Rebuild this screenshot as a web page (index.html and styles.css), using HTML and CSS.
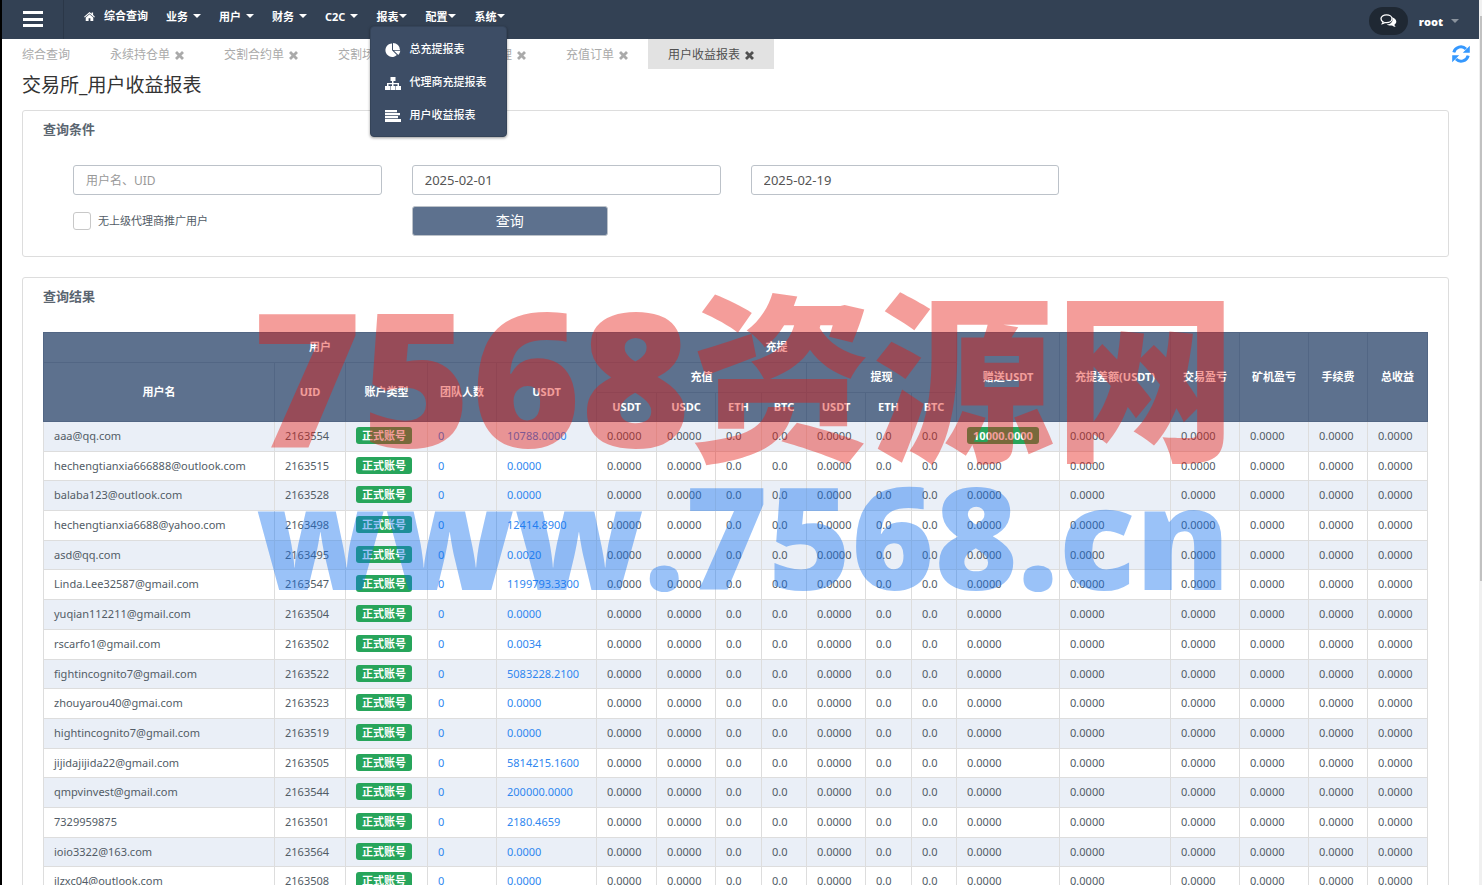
FILE: index.html
```html
<!DOCTYPE html>
<html lang="zh-CN">
<head>
<meta charset="utf-8">
<title>交易所_用户收益报表</title>
<link rel="stylesheet" href="styles.css">
</head>
<body>
<svg class="sprite" aria-hidden="true">
  <symbol id="close" viewBox="0 0 9 9"><path d="M2 2L7 7M7 2L2 7" stroke="currentColor" stroke-width="2.8" fill="none" stroke-linecap="square"/></symbol>
</svg>
<header class="topbar">
  <button class="menu-toggle" type="button" aria-label="菜单">
    <svg viewBox="0 0 20 17" width="20" height="17"><path d="M0 0h20v3H0zM0 7h20v3H0zM0 13h20v3H0z" fill="#fff"/></svg>
  </button>
  <nav class="nav">
    <a class="nav-item home" href="#"><svg viewBox="0 0 12 10" width="11" height="9"><path d="M6 0L0 5.200l.7.900L6 1.600l5.300 4.500.7-.900-2-1.800V.600H8.400v1.400zM6 2.600L1.800 6.100V10h3.200V7h2v3h3.200V6.100z" fill="#fff"/></svg>综合查询</a>
    <button class="nav-item" type="button">业务<i class="caret"></i></button>
    <button class="nav-item" type="button">用户<i class="caret"></i></button>
    <button class="nav-item" type="button">财务<i class="caret"></i></button>
    <button class="nav-item" type="button">C2C<i class="caret"></i></button>
    <div class="dropdown">
      <button class="nav-item tight" type="button" aria-expanded="true">报表<i class="caret"></i></button>
      <ul class="dropdown-menu">
        <li><a href="#"><svg viewBox="0 0 16 16" width="16" height="16"><path d="M7 1.500A6.700 6.700 0 1 0 11.800 13L7 8.200z" fill="#fff"/><path d="M8 1a7 7 0 0 1 7 6.900H8z" fill="#fff"/><path d="M9 8.700h6.300a7 7 0 0 1-2 4.300z" fill="#fff"/></svg>总充提报表</a></li>
        <li><a href="#"><svg viewBox="0 0 16 16" width="16" height="16"><path d="M5.500 2h5v4h-2v2h5.500v3H16v4h-5v-4h1.500V9.300h-4V11H10.500v4h-5v-4H7V9.300H3.500V11H5v4H0v-4h2V8h5V6H5.500z" fill="#fff"/></svg>代理商充提报表</a></li>
        <li><a href="#"><svg viewBox="0 0 16 16" width="16" height="16"><path d="M0 2h12v2.300H0zM0 5h15v2.300H0zM0 8h13v2.300H0zM0 11h16v3H0z" fill="#fff"/></svg>用户收益报表</a></li>
      </ul>
    </div>
    <button class="nav-item tight" type="button">配置<i class="caret"></i></button>
    <button class="nav-item tight" type="button">系统<i class="caret"></i></button>
  </nav>
  <div class="account">
    <button class="chat" type="button" aria-label="消息">
      <svg viewBox="0 0 17 14" width="17" height="14"><path d="M12 3.200c2.600.7 4.300 2.300 4.300 4.300 0 1.300-.7 2.400-1.900 3.200.2.900.7 1.500 1.300 2.200-1.400 0-2.600-.5-3.600-1.400-2.100.3-4-.1-5.300-1 4.200-.2 7-3.300 5.200-7.300z" fill="#fff"/><path d="M6.500.9c3.200 0 5.500 1.700 5.500 3.900s-2.300 3.900-5.500 3.900c-.6 0-1.100 0-1.600-.2-.7.600-1.600 1-2.500 1.100.4-.5.600-1 .7-1.700C1.700 7.200 1 6.100 1 4.800 1 2.600 3.300.9 6.500.9z" fill="#1f2833" stroke="#fff" stroke-width="1.300"/></svg>
    </button>
    <button class="user" type="button">root<i class="caret dim"></i></button>
  </div>
</header>

<nav class="tabs">
  <a class="tab" href="#">综合查询</a>
  <a class="tab" href="#">永续持仓单<svg><use href="#close"/></svg></a>
  <a class="tab" href="#">交割合约单<svg><use href="#close"/></svg></a>
  <a class="tab" href="#">交割场控<svg><use href="#close"/></svg></a>
  <a class="tab" href="#">用户基础管理<svg><use href="#close"/></svg></a>
  <a class="tab" href="#">充值订单<svg><use href="#close"/></svg></a>
  <a class="tab active" href="#" aria-current="page">用户收益报表<svg><use href="#close"/></svg></a>
  <button class="refresh" type="button" aria-label="刷新">
    <svg viewBox="0 0 18 18" width="18" height="18"><g fill="none" stroke="#3598fe" stroke-width="3"><path d="M1.800 7.400A7.300 7.300 0 0 1 14 4"/><path d="M16.200 10.600A7.300 7.300 0 0 1 4 14"/></g><path d="M17.800.8v6.900H10.800zM.2 17.200v-6.900H7.200z" fill="#3598fe"/></svg>
  </button>
</nav>

<main class="content">
  <h1>交易所_用户收益报表</h1>
  <section class="panel">
    <h2>查询条件</h2>
    <form class="filters">
      <input class="field" type="text" placeholder="用户名、UID" aria-label="用户名、UID">
      <input class="field" type="text" value="2025-02-01" aria-label="开始日期">
      <input class="field" type="text" value="2025-02-19" aria-label="结束日期">
      <label class="check"><input type="checkbox">无上级代理商推广用户</label>
      <button class="submit" type="button">查询</button>
    </form>
  </section>
  <section class="panel">
    <h2>查询结果</h2>
    <table class="report">
      <colgroup>
        <col class="c-name"><col class="c-uid"><col class="c-type"><col class="c-team"><col class="c-total">
        <col class="c-usdt"><col class="c-coin"><col class="c-eth"><col class="c-btc">
        <col class="c-coin"><col class="c-eth"><col class="c-btc">
        <col class="c-gift"><col class="c-diff"><col class="c-team"><col class="c-team"><col class="c-coin"><col class="c-usdt">
      </colgroup>
      <thead>
        <tr><th colspan="5">用户</th><th colspan="7">充提</th><th rowspan="3">赠送USDT</th><th rowspan="3">充提差额(USDT)</th><th rowspan="3">交易盈亏</th><th rowspan="3">矿机盈亏</th><th rowspan="3">手续费</th><th rowspan="3">总收益</th></tr>
        <tr><th rowspan="2">用户名</th><th rowspan="2">UID</th><th rowspan="2">账户类型</th><th rowspan="2">团队人数</th><th rowspan="2">USDT</th><th colspan="4">充值</th><th colspan="3">提现</th></tr>
        <tr class="coins"><th>USDT</th><th>USDC</th><th>ETH</th><th>BTC</th><th>USDT</th><th>ETH</th><th>BTC</th></tr>
      </thead>
      <tbody id="rows"></tbody>
    </table>
  </section>
</main>
<div class="watermark" aria-hidden="true">
  <div class="mark-red">7568<span>资源网</span></div>
  <div class="mark-blue">www.7568.cn</div>
</div>
<div class="scrollbar" aria-hidden="true"><div class="thumb"></div></div>
<script src="rows.js"></script>
</body>
</html>
```
FILE: styles.css
```css
* { box-sizing: border-box; }
body {
  margin: 0;
  height: 100vh;
  overflow: hidden;
  position: relative;
  border-left: 2px solid #000;
  background: #fff;
  color: #525c66;
  font: 11px/1.7 "Noto Sans", "Noto Sans CJK SC", sans-serif;
}
button, input { font-family: inherit; margin: 0; }
button { border: 0; padding: 0; background: none; color: inherit; cursor: pointer; }
a { color: inherit; text-decoration: none; }
svg { flex: none; }
.sprite { display: none; }

.topbar { display: flex; height: 39px; background: #334154; color: #fff; padding-right: 20px; margin-right: 3px; }
.menu-toggle { width: 62px; border-right: 1px solid #2b3748; display: flex; align-items: center; justify-content: center; }
.nav { display: flex; gap: 18px; padding-left: 20px; height: 32px; }
.nav-item { display: flex; align-items: center; gap: 5px; height: 32px; font-size: 11px; font-weight: 700; white-space: nowrap; }
.nav-item.home { gap: 9px; }
.nav-item.tight { gap: 1px; }
.caret { border: 4px solid transparent; border-top-color: #fff; border-bottom: 0; }
.caret.dim { border-top-color: #8b939d; }
.dropdown { position: relative; }
.dropdown-menu {
  position: absolute; z-index: 5; top: 26px; left: -6px; width: 137px;
  margin: 0; padding: 6px 0 4px; list-style: none;
  background: #3d4d65; border: 1px solid #354459; border-radius: 4px;
  box-shadow: 0 1px 3px rgba(0, 0, 0, .4);
}
.dropdown-menu a { display: flex; align-items: center; gap: 8px; height: 33px; padding-left: 14px; font-weight: 500; white-space: nowrap; }
.account { display: flex; align-items: center; gap: 11px; margin-left: auto; padding-top: 3px; }
.chat { display: flex; align-items: center; justify-content: center; width: 39px; height: 28px; border-radius: 14px; background: #1f2833; }
.user { display: flex; align-items: center; gap: 8px; font-family: "Open Sans", sans-serif; font-size: 11px; font-weight: 800; }

.tabs { display: flex; height: 30px; padding-right: 12px; font-size: 12px; color: #aaa; }
.tab { display: flex; align-items: center; gap: 5px; padding: 2px 20px 0; white-space: nowrap; }
.tab svg { width: 9px; height: 9px; }
.tab.active { background: #e2e2e2; color: #505050; }
.refresh { display: flex; align-items: center; margin-left: auto; }

.content { padding: 1px 33px 0 20px; }
h1 { margin: 0; height: 40px; font-size: 19px; line-height: 30px; font-weight: 400; color: #333; }
.panel { border: 1px solid #ddd; border-radius: 3px; padding: 9px 20px 20px; margin-bottom: 20px; }
h2 { margin: 0; font-size: 13px; line-height: 18px; font-weight: 700; color: #5a6570; }
.filters { display: grid; grid-template-columns: repeat(4, 1fr); gap: 11px 30px; padding: 27px 30px 0; }
.field { height: 30px; min-width: 0; padding: 0 12px; border: 1px solid #bcc2c9; border-radius: 3px; font-size: 13px; color: #555; }
.field::placeholder { color: #999; font-size: 12px; opacity: 1; }
.check { grid-column: 1; display: flex; align-items: center; gap: 7px; }
.check input { appearance: none; width: 18px; height: 18px; margin: 0; border: 1px solid #c8c8c8; border-radius: 3px; background: #fff; }
.submit { width: 196px; height: 30px; border: 1px solid #bcc2c9; border-radius: 3px; background: #5d718e; color: #fff; font-size: 14px; line-height: 26px; }

.report { width: 100%; margin-top: 27px; table-layout: fixed; border-collapse: collapse; }
.report th, .report td { padding: 5px 10px; border: 1px solid #ddd; text-align: left; font-weight: 400; white-space: nowrap; }
.report thead th { padding: 5px 0; background: #5d718e; border-color: #526684; color: #fff; font-weight: 700; text-align: center; height: 30px; }
.report thead .coins th { padding: 5px 0 4px; height: 29px; }
.report tbody tr:nth-child(odd) { background: #eaeff7; }
.report a { color: #3087f0; }
.badge { display: inline-block; padding: 0 6px; border-radius: 3px; background: #27a55b; color: #fff; font-weight: 700; line-height: 17px; vertical-align: top; }
.c-name { width: 231px; }
.c-uid { width: 71px; }
.c-type { width: 82px; }
.c-team { width: 69px; }
.c-total { width: 100px; }
.c-usdt { width: 60px; }
.c-coin { width: 59px; }
.c-eth { width: 46px; }
.c-btc { width: 45px; }
.c-gift { width: 103px; }
.c-diff { width: 111px; }

.watermark { position: absolute; z-index: 8; top: 268px; left: 250px; pointer-events: none; font-family: "Open Sans", sans-serif; font-weight: 800; white-space: nowrap; opacity: .42; }
.mark-red { color: #e71810; font-size: 187px; line-height: 200px; }
.mark-red span { font-family: "Noto Sans CJK SC", sans-serif; font-weight: 900; font-size: 182px; }
.mark-blue { padding-left: 4px; color: #1070f0; font-size: 142px; line-height: 120px; }
.scrollbar { position: absolute; top: 0; right: 0; width: 3px; height: 100%; padding: 16px 0 0 1px; background: #f0f0f0; }
.thumb { height: 65%; background: #c1c1c1; }
```
FILE: rows.js
```js
const users = [
  ["aaa@qq.com", 2163554, "10788.0000", "10000.0000"],
  ["hechengtianxia666888@outlook.com", 2163515, "0.0000"],
  ["balaba123@outlook.com", 2163528, "0.0000"],
  ["hechengtianxia6688@yahoo.com", 2163498, "12414.8900"],
  ["asd@qq.com", 2163495, "0.0020"],
  ["Linda.Lee32587@gmail.com", 2163547, "1199793.3300"],
  ["yuqian112211@gmail.com", 2163504, "0.0000"],
  ["rscarfo1@gmail.com", 2163502, "0.0034"],
  ["fightincognito7@gmail.com", 2163522, "5083228.2100"],
  ["zhouyarou40@gmai.com", 2163523, "0.0000"],
  ["hightincognito7@gmail.com", 2163519, "0.0000"],
  ["jijidajijida22@gmail.com", 2163505, "5814215.1600"],
  ["qmpvinvest@gmail.com", 2163544, "200000.0000"],
  ["7329959875", 2163501, "2180.4659"],
  ["ioio3322@163.com", 2163564, "0.0000"],
  ["jlzxc04@outlook.com", 2163508, "0.0000"]
];
const badge = text => `<span class="badge">${text}</span>`;
const link = text => `<a href="#">${text}</a>`;
const zero = "0.0000", short = "0.0";

document.getElementById("rows").innerHTML = users.map(([name, uid, total, gift]) => {
  const cells = [name, uid, badge("正式账号"), link("0"), link(total),
    zero, zero, short, short, zero, short, short,
    gift ? badge(gift) : zero, zero, zero, zero, zero, zero];
  return `<tr>${cells.map(c => `<td>${c}</td>`).join("")}</tr>`;
}).join("");
```
